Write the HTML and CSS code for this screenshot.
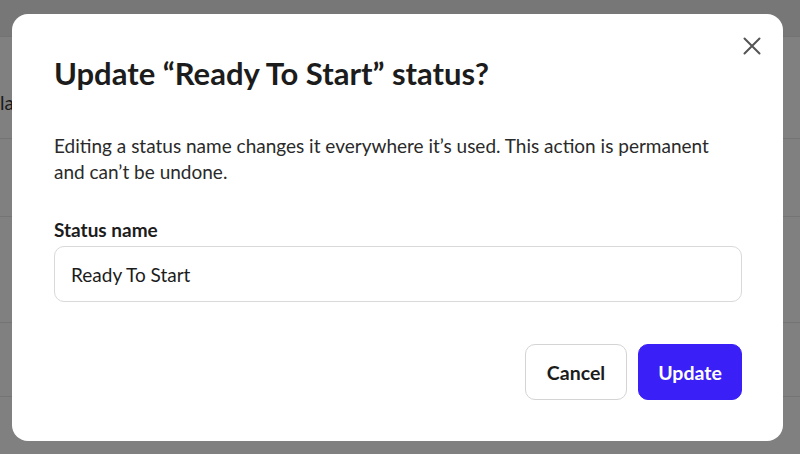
FILE: index.html
```html
<!DOCTYPE html>
<html lang="en">
<head>
  <meta charset="UTF-8" />
  <meta name="viewport" content="width=device-width, initial-scale=1.0"/>
  <title>Update status</title>
  <link rel="stylesheet" href="styles.css">
</head>
<body>
  <!-- page behind the overlay -->
  <div class="page">
    <div class="page-topbar"></div>
    <div class="page-row page-row-head"><span class="page-cell">la</span></div>
    <div class="page-row page-row-1"></div>
    <div class="page-row page-row-2"></div>
    <div class="page-row page-row-3"></div>
  </div>

  <div class="overlay">
    <div class="modal">
      <button class="modal-close" aria-label="Close">
        <svg width="18" height="18" viewBox="0 0 18 18">
          <path d="M1.5 1.5 L16.5 16.5 M16.5 1.5 L1.5 16.5" stroke="#555" stroke-width="2" stroke-linecap="round" fill="none"/>
        </svg>
      </button>

      <h2 class="modal-title">Update “Ready To Start” status?</h2>
      <p class="modal-text">Editing a status name changes it everywhere it’s used. This action is permanent and can’t be undone.</p>

      <label class="field-label" for="status-name">Status name</label>
      <input type="text" id="status-name" class="field-input" value="Ready To Start" />

      <div class="modal-actions">
        <button class="btn btn-cancel">Cancel</button>
        <button class="btn btn-primary">Update</button>
      </div>
    </div>
  </div>
</body>
</html>
```

FILE: styles.css
```css
body {
  margin: 0;
  padding: 0;
  font-family: 'Lato', sans-serif;
  background-color: #808080;
  height: 454px;
  overflow: hidden;
}

.page-topbar {
  height: 36px;
  background-color: #777777;
  border-bottom: 1px solid #737373;
}

.page-row {
  border-bottom: 1px solid #747474;
}

.page-row-head {
  height: 102px;
  display: flex;
  align-items: center;
  padding-top: 30px;
  box-sizing: border-box;
}

.page-cell {
  font-size: 19px;
  color: #1a1a1a;
  margin-left: 0;
}

.page-row-1 {
  height: 77px;
}

.page-row-2 {
  height: 105px;
}

.page-row-3 {
  height: 73px;
}

.overlay {
  position: fixed;
  inset: 0;
}

.modal {
  position: absolute;
  left: 12px;
  top: 14px;
  width: 771px;
  height: 427px;
  box-sizing: border-box;
  background-color: #ffffff;
  border-radius: 16px;
  padding: 39px 42px 0 42px;
  color: #1c1c1c;
}

.modal-close {
  position: absolute;
  top: 23px;
  right: 22px;
  width: 18px;
  height: 18px;
  padding: 0;
  border: none;
  background: none;
  cursor: pointer;
}

.modal-close svg {
  display: block;
}

.modal-title {
  margin: 0;
  font-size: 31px;
  font-weight: 700;
  line-height: 40px;
  color: #1c1c1c;
}

.modal-text {
  margin: 40px 0 0;
  font-size: 19px;
  line-height: 26px;
  color: #2a2a2a;
  max-width: 688px;
}

.field-label {
  display: block;
  margin-top: 33px;
  font-size: 19px;
  font-weight: 700;
  line-height: 24px;
  color: #1c1c1c;
}

.field-input {
  display: block;
  box-sizing: border-box;
  width: 688px;
  height: 56px;
  margin-top: 4px;
  padding: 0 16px;
  border: 1px solid #d9d9d9;
  border-radius: 10px;
  font-family: 'Lato', sans-serif;
  font-size: 19px;
  color: #1c1c1c;
  outline: none;
}

.modal-actions {
  display: flex;
  justify-content: flex-end;
  gap: 11px;
  width: 688px;
  margin-top: 42px;
}

.btn {
  height: 56px;
  padding: 0;
  border-radius: 10px;
  font-family: 'Lato', sans-serif;
  font-size: 19.5px;
  font-weight: 700;
  cursor: pointer;
}

.btn-cancel {
  width: 102px;
  background-color: #ffffff;
  border: 1px solid #d4d4d4;
  color: #1c1c1c;
}

.btn-primary {
  width: 104px;
  background-color: #3a1ff7;
  border: 1px solid #3a1ff7;
  color: #ffffff;
}
```
